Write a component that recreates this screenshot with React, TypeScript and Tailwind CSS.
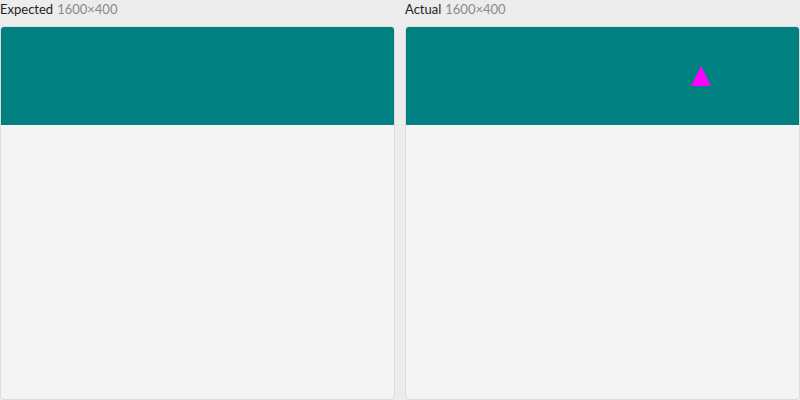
import React from "react";

function Panel({ label, children }: { label: string; children?: React.ReactNode }) {
  return (
    <div className="flex flex-col min-w-0">
      <div className="h-[26px] flex items-start pt-[1px] text-[13px] leading-[16px] whitespace-nowrap">
        <span className="text-[#222222]">{label}</span>
        <span className="ml-[4px] text-[#8a8a8a]">1600×400</span>
      </div>
      <div className="flex-1 flex flex-col border border-[#dcdcdc] rounded-[4px] overflow-hidden bg-[#f4f4f4]">
        <div className="h-[98px] bg-[#008080] relative">{children}</div>
        <div className="flex-1" />
      </div>
    </div>
  );
}

export default function App() {
  return (
    <div
      className="w-[800px] h-[400px] bg-[#ececec] grid grid-cols-2 gap-[10px] overflow-hidden"
      style={{ fontFamily: 'Lato, "Noto Sans", sans-serif' }}
    >
      <Panel label="Expected" />
      <Panel label="Actual">
        <svg className="absolute left-[285px] top-[39px]" width="20" height="21" viewBox="0 0 20 21">
          <polygon points="10,0 20,20 0,20" fill="#ff00ff" />
        </svg>
      </Panel>
    </div>
  );
}
